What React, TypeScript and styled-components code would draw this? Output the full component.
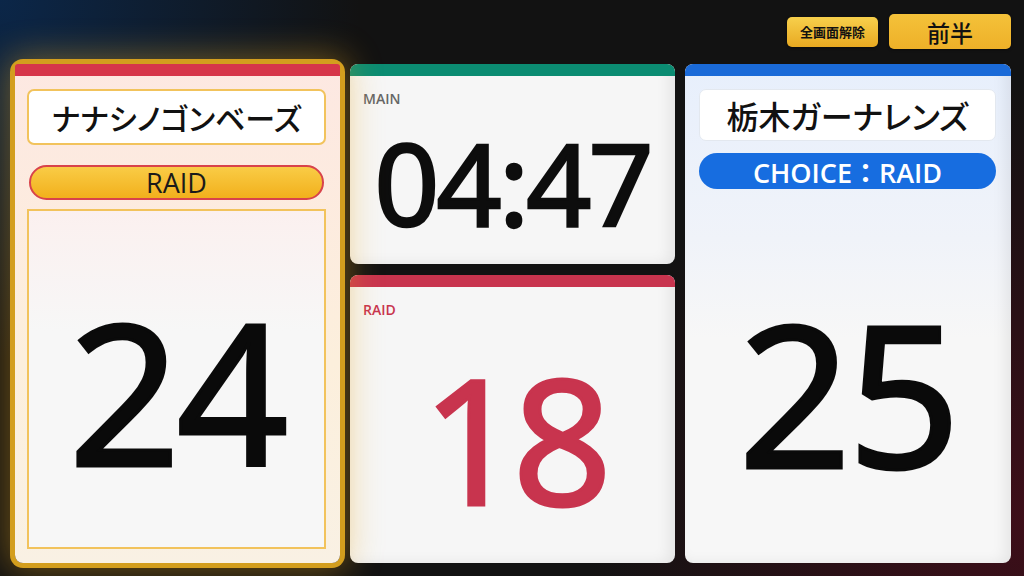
import React from 'react';
import styled, { createGlobalStyle } from 'styled-components';

const GlobalStyle = createGlobalStyle`
  html, body {
    margin: 0;
    padding: 0;
    height: 100%;
  }
  body {
    font-family: 'Noto Sans', 'Noto Sans CJK JP', sans-serif;
    background: #111;
  }
  * {
    box-sizing: border-box;
  }
`;

const Screen = styled.div`
  width: 1024px;
  height: 576px;
  overflow: hidden;
  display: flex;
  flex-direction: column;
  padding: 14px 13px 13px 15px;
  gap: 15px;
  background:
    radial-gradient(circle at 0% 0%, rgba(10, 42, 82, 0.85) 0, rgba(10, 42, 82, 0) 360px),
    radial-gradient(circle at 100% 90%, rgba(66, 14, 26, 0.9) 0, rgba(66, 14, 26, 0) 440px),
    #121212;
`;

const TopBar = styled.div`
  height: 35px;
  display: flex;
  justify-content: flex-end;
  align-items: center;
  gap: 11px;
`;

const GoldButton = styled.button<{ $big?: boolean }>`
  border: none;
  border-radius: 5px;
  font-family: 'Noto Sans CJK JP', sans-serif;
  color: #111;
  cursor: pointer;
  padding: 0;
  width: ${(p) => (p.$big ? '122px' : '91px')};
  height: ${(p) => (p.$big ? '35px' : '30px')};
  font-size: ${(p) => (p.$big ? '23px' : '13px')};
  font-weight: ${(p) => (p.$big ? 500 : 700)};
  background: ${(p) =>
    p.$big
      ? 'linear-gradient(#f4c23a, #eeb028)'
      : 'linear-gradient(#f7d04c, #e8a921)'};
  box-shadow: 0 1px 3px rgba(0, 0, 0, 0.4);
`;

const Board = styled.div`
  flex: 1;
  display: grid;
  grid-template-columns: 325px 325px 326px;
  column-gap: 10px;
`;

const Card = styled.div<{ $bg?: string }>`
  position: relative;
  border-radius: 8px;
  overflow: hidden;
  display: flex;
  flex-direction: column;
  background: ${(p) => p.$bg || '#f6f6f6'};
  box-shadow: inset -6px 0 14px rgba(0, 0, 0, 0.07);
`;

const ActiveCard = styled(Card)`
  overflow: visible;
  z-index: 2;
  box-shadow:
    0 0 0 5px #d39e1e,
    0 0 34px 8px rgba(235, 170, 30, 0.42);
  padding: 0 14px 14px 12px;
`;

const Stripe = styled.div<{ $color: string }>`
  height: 12px;
  flex: none;
  background: ${(p) => p.$color};
  border-radius: 7px 7px 0 0;
`;

const ActiveStripe = styled(Stripe)`
  margin: 0 -14px 0 -12px;
  border-radius: 3px 3px 0 0;
`;

const NameBox = styled.div<{ $border: string; $height: number; $size: number }>`
  margin-top: 13px;
  height: ${(p) => p.$height}px;
  flex: none;
  background: #fff;
  border: ${(p) => p.$border};
  border-radius: 7px;
  display: flex;
  align-items: center;
  justify-content: center;
  font-family: 'Noto Sans CJK JP', sans-serif;
  font-feature-settings: 'palt';
  font-size: ${(p) => p.$size}px;
  font-weight: 500;
  color: #111;
  white-space: nowrap;
`;

const Pill = styled.div<{ $variant: 'gold' | 'blue' }>`
  flex: none;
  border-radius: 999px;
  display: flex;
  align-items: center;
  justify-content: center;
  font-family: 'Open Sans', 'Noto Sans CJK JP', sans-serif;
  ${(p) =>
    p.$variant === 'gold'
      ? `
    margin: 20px 2px 0 2px;
    height: 35px;
    font-size: 27px;
    font-weight: 500;
    color: #1a1a1a;
    border: 2px solid #d8434b;
    background: linear-gradient(#f9cc46, #f2b01c);
  `
      : `
    margin-top: 12px;
    height: 36px;
    font-size: 27px;
    font-weight: 600;
    color: #fff;
    background: #176de0;
  `}
`;

const ScoreBox = styled.div`
  margin-top: 9px;
  flex: 1;
  border: 2px solid #f2c35c;
  background: linear-gradient(#fbf0ef 0, #f7f7f7 120px);
  display: flex;
  align-items: center;
  justify-content: center;
  padding-top: 22px;
`;

const ScoreArea = styled.div`
  flex: 1;
  display: flex;
  align-items: center;
  justify-content: center;
  padding-top: 30px;
`;

/* medium weight isn't installed, so regular gets a thin stroke */
const Score = styled.div<{ $color?: string; $size: number; $spacing?: number }>`
  font-family: 'Noto Sans', sans-serif;
  font-size: ${(p) => p.$size}px;
  font-weight: 400;
  line-height: 1;
  letter-spacing: ${(p) => p.$spacing ?? -4}px;
  color: ${(p) => p.$color || '#0a0a0a'};
  -webkit-text-stroke: 3px ${(p) => p.$color || '#0a0a0a'};
`;

const SideBody = styled.div`
  flex: 1;
  display: flex;
  flex-direction: column;
  padding: 0 15px 0 14px;
`;

const CenterColumn = styled.div`
  display: grid;
  grid-template-rows: 200px 1fr;
  row-gap: 11px;
`;

const Label = styled.div<{ $color: string }>`
  flex: none;
  padding: 13px 0 0 13px;
  font-family: 'Open Sans', sans-serif;
  font-size: 14px;
  font-weight: 600;
  color: ${(p) => p.$color};
  line-height: 20px;
`;

const Timer = styled.div`
  flex: 1;
  display: flex;
  align-items: center;
  justify-content: center;
  font-family: 'Noto Sans', sans-serif;
  font-size: 114px;
  font-weight: 400;
  letter-spacing: -3px;
  color: #0d0d0d;
  -webkit-text-stroke: 2.5px #0d0d0d;
  line-height: 0.8;
  padding-bottom: 10px;
`;

const CountArea = styled.div`
  flex: 1;
  display: flex;
  align-items: center;
  justify-content: center;
  padding-bottom: 8px;
`;

export default function App() {
  return (
    <>
      <GlobalStyle />
      <Screen>
        <TopBar>
          <GoldButton>全画面解除</GoldButton>
          <GoldButton $big>前半</GoldButton>
        </TopBar>
        <Board>
          <ActiveCard $bg="linear-gradient(#fde8e2 0, #fcefdc 60%, #f9f1e4 100%)">
            <ActiveStripe $color="#d6364a" />
            <NameBox $border="2px solid #f2c35c" $height={56} $size={30}>
              ナナシノゴンベーズ
            </NameBox>
            <Pill $variant="gold">RAID</Pill>
            <ScoreBox>
              <Score $size={196}>24</Score>
            </ScoreBox>
          </ActiveCard>

          <CenterColumn>
            <Card>
              <Stripe $color="#0b8c72" />
              <Label $color="#666">MAIN</Label>
              <Timer>04:47</Timer>
            </Card>
            <Card>
              <Stripe $color="#c8344e" />
              <Label $color="#c8344e">RAID</Label>
              <CountArea>
                <Score $size={174} $spacing={-9} $color="#c8344e">
                  18
                </Score>
              </CountArea>
            </Card>
          </CenterColumn>

          <Card $bg="linear-gradient(#e7effc 0, #f0f3f9 35%, #f7f7f7 55%)">
            <Stripe $color="#1a6ad8" />
            <SideBody>
              <NameBox $border="1px solid #e3e8ef" $height={52} $size={32}>
                栃木ガーナレンズ
              </NameBox>
              <Pill $variant="blue">CHOICE：RAID</Pill>
              <ScoreArea>
                <Score $size={198}>25</Score>
              </ScoreArea>
            </SideBody>
          </Card>
        </Board>
      </Screen>
    </>
  );
}
